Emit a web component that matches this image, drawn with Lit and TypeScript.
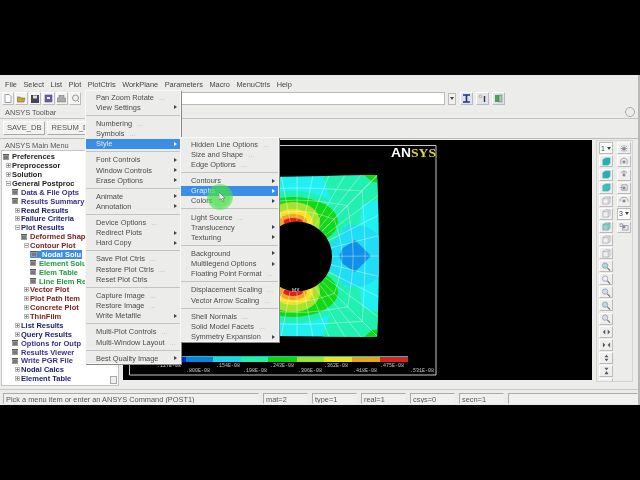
import { LitElement, html, css, svg } from "lit";
import { customElement } from "lit/decorators.js";

type MenuRow = { t?: string; dots?: boolean; sub?: boolean; on?: boolean; sep?: boolean };

const row = (t: string, flags = "") => ({
  t,
  dots: flags.includes("d"),
  sub: flags.includes("s"),
  on: flags.includes("o"),
});
const sep = { sep: true };

const plotMenu: MenuRow[] = [
  row("Pan Zoom Rotate", "d"), row("View Settings", "s"), sep,
  row("Numbering", "d"), row("Symbols", "d"), row("Style", "so"), sep,
  row("Font Controls", "s"), row("Window Controls", "s"), row("Erase Options", "s"), sep,
  row("Animate", "s"), row("Annotation", "s"), sep,
  row("Device Options", "d"), row("Redirect Plots", "s"), row("Hard Copy", "s"), sep,
  row("Save Plot Ctrls", "d"), row("Restore Plot Ctrls", "d"), row("Reset Plot Ctrls"), sep,
  row("Capture Image", "d"), row("Restore Image", "d"), row("Write Metafile", "s"), sep,
  row("Multi-Plot Controls", "d"), row("Multi-Window Layout", "d"), sep,
  row("Best Quality Image", "s"),
];

const styleMenu: MenuRow[] = [
  row("Hidden Line Options", "d"), row("Size and Shape", "d"), row("Edge Options", "d"), sep,
  row("Contours", "s"), row("Graphs", "so"), row("Colors", "s"), sep,
  row("Light Source", "d"), row("Translucency", "s"), row("Texturing", "s"), sep,
  row("Background", "s"), row("Multilegend Options", "s"), row("Floating Point Format", "d"), sep,
  row("Displacement Scaling", "d"), row("Vector Arrow Scaling", "d"), sep,
  row("Shell Normals", "d"), row("Solid Model Facets", "d"), row("Symmetry Expansion", "s"),
];

// level, icon (b = box, p = plus, m = minus), colour class, label
const tree: [number, string, string, string][] = [
  [0, "b", "k", "Preferences"], [0, "p", "k", "Preprocessor"], [0, "p", "k", "Solution"],
  [0, "m", "k", "General Postproc"],
  [1, "b", "v", "Data & File Opts"], [1, "b", "v", "Results Summary"],
  [1, "p", "n", "Read Results"], [1, "p", "n", "Failure Criteria"], [1, "m", "n", "Plot Results"],
  [2, "b", "r", "Deformed Shape"], [2, "m", "r", "Contour Plot"],
  [3, "b", "sel", "Nodal Solu"], [3, "b", "g", "Element Solu"], [3, "b", "g", "Elem Table"],
  [3, "b", "g", "Line Elem Res"],
  [2, "p", "r", "Vector Plot"], [2, "p", "r", "Plot Path Item"], [2, "p", "r", "Concrete Plot"],
  [2, "p", "r", "ThinFilm"],
  [1, "p", "n", "List Results"], [1, "p", "n", "Query Results"], [1, "b", "v", "Options for Outp"],
  [1, "b", "v", "Results Viewer"], [1, "b", "v", "Write PGR File"], [1, "p", "n", "Nodal Calcs"],
  [1, "p", "n", "Element Table"],
];

const bands: [number, number, string][] = [
  [182, 186, "#0a20c8"], [186, 213, "#1080e0"], [213, 241, "#20d4f0"], [241, 268, "#20f0a8"],
  [268, 297, "#10d410"], [297, 324, "#a0e030"], [324, 352, "#f0e020"], [352, 380, "#f0a020"],
  [380, 408, "#e02020"],
];

const hx = 297;
const hy = 257.5;

// mesh spokes run from the hole out to evenly spaced points on the plate edge
function meshLines() {
  const edge: [number, number][] = [];
  for (let x = 249; x < 378; x += 16) edge.push([x, 176]);
  for (let y = 176; y <= 338; y += 20.25) edge.push([378, y]);
  for (let x = 361; x > 249; x -= 16) edge.push([x, 338]);
  const lerp = ([ex, ey]: [number, number], t: number) => {
    const d = Math.hypot(ex - hx, ey - hy);
    const cx = hx + ((ex - hx) / d) * 35;
    const cy = hy + ((ey - hy) / d) * 35;
    return `${(cx + (ex - cx) * t).toFixed(1)},${(cy + (ey - cy) * t).toFixed(1)}`;
  };
  const paths = edge.map((p) => `M${lerp(p, 0)}L${lerp(p, 1)}`);
  [0.22, 0.46, 0.72].forEach((t) => {
    paths.push("M" + edge.map((p) => lerp(p, t)).join("L"));
  });
  return paths.join("");
}

function contours(cy: number) {
  return svg`
    <ellipse cx="293" cy=${cy} rx="52" ry="31" fill="#22f0b0" />
    <ellipse cx="293" cy=${cy} rx="45" ry="25" fill="#12d818" />
    <ellipse cx="293" cy=${cy} rx="27" ry="20" fill="#a4e430" />
    <ellipse cx="293" cy=${cy} rx="20" ry="13" fill="#f2e422" />
    <ellipse cx="293" cy=${cy} rx="14" ry="8" fill="#f2a422" />
    <ellipse cx="293" cy=${cy} rx="10" ry="4" fill="#e02020" />`;
}

const cube = (fill: string, line: string) => svg`
  <svg width="10" height="9" viewBox="0 0 11 10">
    <path d="M2 3L5 1H10V7L8 9H2Z" fill=${fill} stroke=${line} stroke-width=".7" />
    <path d="M2 3H8V9M8 3L10 1" fill="none" stroke=${line} stroke-width=".6" />
  </svg>`;

const lens = (fill: string) => svg`
  <svg width="10" height="9" viewBox="0 0 11 10">
    <circle cx="4.5" cy="4" r="3" fill=${fill} stroke="#99a" stroke-width=".9" />
    <path d="M7 6.5L10 9.5" stroke="#667" stroke-width="1.2" />
  </svg>`;

const arrows = (d: string) => svg`
  <svg width="9" height="8" viewBox="0 0 11 10"><path d=${d} fill="#556" /></svg>`;

const viewIcon = (d: string) => svg`
  <svg width="10" height="9" viewBox="0 0 11 10">
    <path d=${d} fill="none" stroke="#889" stroke-width=".8" />
    <rect x="4" y="4" width="3" height="3" fill="#889" />
  </svg>`;

const sideColumn = [
  cube("#20b0b8", "#4aa"), cube("#20b0b8", "#4aa"), cube("#40c0c0", "#4aa"),
  cube("#f0f0ee", "#99a"), cube("#f0f0ee", "#99a"), cube("#90d4cc", "#799"), cube("#f0f0ee", "#99a"),
  cube("#f0f0ee", "#99a"),
  lens("#a8dcd8"), lens("#eef"), lens("#cde"), lens("#b8d8e0"), lens("#dde"),
  arrows("M1 5L4 2V8ZM10 5L7 2V8Z"), arrows("M4 5L1 2V8ZM7 5L10 2V8Z"),
  arrows("M5.5 1L8 4H3ZM3 6H8L5.5 9Z"), arrows("M3 1H8L5.5 4ZM5.5 5L8 9H3Z"), arrows("M1 5L4 3V7ZM10 5L7 3V7Z"),
];

const viewColumn = [
  viewIcon("M5.5 1V9M1.5 5H9.5M2 2L9 8M9 2L2 8"),
  viewIcon("M2 8V3L5.5 1L9 3V8"),
  viewIcon("M2 3L5.5 1L9 3M5.5 1V4"),
  viewIcon("M3 2H9V8H3ZM1 5H3"),
  viewIcon("M1 6A4.5 4.5 0 0 1 10 6"),
  null,
  viewIcon("M1 2H4V5H1ZM4 4H10V9H4Z"),
];

@customElement("app-root")
export class AppRoot extends LitElement {
  static styles = css`
    :host {
      display: block;
      width: 640px;
      height: 480px;
      background: #000;
      overflow: hidden;
      font-family: "Liberation Sans", Arial, sans-serif;
      font-size: 7.4px;
      color: #444;
    }
    .win {
      position: relative;
      display: flex;
      flex-direction: column;
      margin-top: 75px;
      height: 330px;
      background: #ececea;
      border-right: 2px solid #b8b8b8;
      filter: blur(0.5px);
    }
    .menubar {
      display: flex;
      align-items: center;
      height: 16px;
      padding: 2px 0 0 5px;
      gap: 6.5px;
      color: #444;
    }
    .tools {
      display: flex;
      align-items: center;
      height: 17px;
      padding-left: 2px;
      gap: 1px;
    }
    .tool {
      flex: none;
      display: flex;
      align-items: center;
      justify-content: center;
      width: 12.4px;
      height: 13px;
      box-sizing: border-box;
      background: #f4f4f2;
      border: 1px solid;
      border-color: #fff #bbb #bbb #fff;
    }
    .cmd {
      flex: 0 0 355px;
      margin-left: 8px;
      height: 13px;
      box-sizing: border-box;
      background: #fff;
      border: 1px solid #bbb;
    }
    .drop {
      flex: none;
      width: 8px;
      height: 12px;
      margin-left: 2px;
      box-sizing: border-box;
      display: flex;
      align-items: center;
      justify-content: center;
      background: #f0f0ee;
      border: 1px solid #bbb;
    }
    .tail {
      margin-left: 3px;
      display: flex;
      gap: 3px;
    }
    .tail .tool {
      width: 13px;
      background: #dfe4ec;
    }
    .tb-label {
      display: flex;
      justify-content: space-between;
      align-items: center;
      height: 13px;
      padding: 0 3px 0 5px;
      color: #555;
      border-bottom: 1px solid #c4c4c4;
    }
    .circle {
      width: 8px;
      height: 8px;
      border-radius: 50%;
      border: 1px solid #aaa;
    }
    .tb-row {
      display: flex;
      gap: 2px;
      height: 19px;
      padding: 2px 0 0 3px;
      border-bottom: 1px solid #bcbcbc;
    }
    .tb-btn {
      height: 12px;
      padding: 0 3px;
      line-height: 12px;
      font-size: 7.6px;
      color: #555;
      background: #f2f2f0;
      border: 1px solid;
      border-color: #fff #aaa #aaa #fff;
      white-space: nowrap;
    }
    .body {
      display: flex;
      height: 246px;
      margin-top: 1px;
    }
    .left {
      flex: 0 0 123px;
      display: flex;
      flex-direction: column;
    }
    .left-title {
      height: 10px;
      line-height: 11px;
      padding-left: 5px;
      color: #555;
    }
    .treebox {
      position: relative;
      flex: 0 0 233px;
      margin: 0 4px 0 1px;
      padding-top: 1px;
      background: #fff;
      border: 1px solid #c4c4c4;
      overflow: hidden;
    }
    .node {
      display: flex;
      align-items: center;
      height: 8.88px;
      font-weight: 700;
      font-size: 7.5px;
      white-space: nowrap;
    }
    .l0 { padding-left: 1px; }
    .l1 { padding-left: 10px; }
    .l2 { padding-left: 19px; }
    .l3 { padding-left: 28px; }
    .ico {
      flex: 0 0 9px;
      height: 7px;
      display: flex;
      align-items: center;
    }
    .ico.exp {
      padding-left: 3px;
      box-sizing: border-box;
    }
    .box {
      width: 6px;
      height: 6px;
      background: #777;
      border-top: 1px solid #555;
      box-sizing: border-box;
      box-shadow: inset 0 0 0 1px #999;
    }
    .k { color: #222; }
    .v { color: #3b2f8c; }
    .n { color: #1c1c6e; }
    .r { color: #7c2020; }
    .g { color: #1c9a3c; }
    .sel span {
      color: #fff;
      background: #3a8ee8;
      padding: 0 1px;
    }
    .scroll {
      position: absolute;
      right: 1px;
      bottom: 1px;
      width: 7px;
      height: 8px;
      background: #eee;
      border: 1px solid #aaa;
      box-sizing: border-box;
    }
    .canvas {
      flex: 0 0 469px;
      height: 240px;
      background: #000;
    }
    .canvas svg {
      display: block;
    }
    .right {
      flex: 1;
      display: flex;
      gap: 4px;
      height: 242px;
      margin: 0 5px 0 4px;
      padding: 1px 0 0 2px;
      border: 1px solid #d4d4d4;
      box-sizing: border-box;
      overflow: hidden;
    }
    .col {
      display: flex;
      flex-direction: column;
      gap: 1.1px;
    }
    .bt {
      flex: none;
      display: flex;
      align-items: center;
      justify-content: center;
      width: 14px;
      height: 12px;
      box-sizing: border-box;
      background: #efefed;
      border: 1px solid;
      border-color: #fff #bbb #bbb #fff;
      font-size: 7px;
    }
    .bt.sel-num {
      background: #fff;
      border-color: #bbb;
      justify-content: space-between;
      padding: 0 1px;
    }
    .tiny {
      border-left: 2px solid transparent;
      border-right: 2px solid transparent;
      border-top: 3px solid #444;
    }
    .status {
      display: flex;
      gap: 4px;
      height: 13px;
      margin-top: 3px;
      padding: 3px 0 0 3px;
      border-top: 1px solid #c8c8c8;
      color: #555;
    }
    .field {
      flex: none;
      height: 11px;
      line-height: 11px;
      padding-left: 2px;
      box-sizing: border-box;
      background: #f0f0ee;
      border: 1px solid;
      border-color: #aaa #eee #eee #aaa;
      white-space: nowrap;
      overflow: hidden;
    }
    .f-main { width: 256px; }
    .f-small { width: 45px; }
    .f-rest { flex: 1; }
    .menu {
      position: absolute;
      box-sizing: border-box;
      padding: 2px 1px;
      background: #ececea;
      box-shadow: 1px 1px 0 #888, inset 0 0 0 1px #f8f8f8;
      color: #4a4a4a;
    }
    .m1 { left: 85px; top: 15px; width: 96px; height: 274px; }
    .m2 { left: 180px; top: 62px; width: 99px; height: 205px; }
    .mi {
      display: flex;
      justify-content: space-between;
      align-items: center;
      height: 10.2px;
      padding: 0 3px 0 10px;
      white-space: nowrap;
    }
    .mi.on {
      background: #3a8ee8;
      color: #dfeaf8;
    }
    .msep {
      height: 5.9px;
      display: flex;
      align-items: center;
    }
    .msep::after {
      content: "";
      flex: 1;
      height: 1px;
      background: #c4c4c4;
    }
    .dots {
      color: #bbb;
      margin-left: 5px;
    }
    .arrow {
      border-top: 2px solid transparent;
      border-bottom: 2px solid transparent;
      border-left: 3px solid #444;
    }
    .on .arrow { border-left-color: #fff; }
    .pointer {
      position: absolute;
      left: 207px;
      top: 109px;
      width: 26px;
      height: 26px;
      border-radius: 50%;
      background: radial-gradient(circle, rgba(70, 225, 70, 0.75) 50%, rgba(70, 225, 70, 0.15) 100%);
    }
    .pointer svg {
      position: absolute;
      left: 12px;
      top: 8px;
    }
  `;

  private renderMenu(cls: string, rows: MenuRow[]) {
    return html`<div class="menu ${cls}">
      ${rows.map((r) =>
        r.sep
          ? html`<div class="msep"></div>`
          : html`<div class="mi ${r.on ? "on" : ""}">
              <span>${r.t}${r.dots ? html`<span class="dots">...</span>` : ""}</span>
              ${r.sub ? html`<i class="arrow"></i>` : ""}
            </div>`
      )}
    </div>`;
  }

  private renderNode([level, icon, color, label]: [number, string, string, string]) {
    const glyph =
      icon === "b"
        ? html`<span class="ico"><i class="box"></i></span>`
        : html`<span class="ico exp">
            <svg width="5" height="5" viewBox="0 0 5 5">
              <rect x=".5" y=".5" width="4" height="4" fill="none" stroke="#aaa" stroke-width=".8" />
              <path d=${icon === "p" ? "M1 2.5H4M2.5 1V4" : "M1 2.5H4"} stroke="#666" stroke-width=".7" />
            </svg>
          </span>`;
    return html`<div class="node l${level} ${color}">${glyph}<span>${label}</span></div>`;
  }

  private renderPlot() {
    return html`<svg width="469" height="240" viewBox="123 141 469 240">
      <defs>
        <clipPath id="plate">
          <path d="M270 178L377 176Q381 257 377 338L270 337Z" />
        </clipPath>
      </defs>
      <path d="M129.5 376V146.5H436V376Z" fill="none" stroke="#c8c8c8" />
      <text x="391" y="158" font-family="Liberation Sans" font-weight="700" font-size="12" fill="#fff"
        textLength="20" lengthAdjust="spacingAndGlyphs">AN</text>
      <text x="411" y="158" font-family="Liberation Serif" font-weight="700" font-size="12" fill="#d8d840"
        textLength="25" lengthAdjust="spacingAndGlyphs">SYS</text>
      <g clip-path="url(#plate)">
        <rect x="270" y="170" width="115" height="175" fill="#20f0f0" />
        <path d="M322 174H385V198L362 206L358 232L338 222Z" fill="#22f0b0" />
        <path d="M322 340H385V316L362 308L358 282L338 292Z" fill="#22f0b0" />
        <path d="M362 174H385V184L372 183Z" fill="#12d818" />
        <path d="M362 340H385V330L372 331Z" fill="#12d818" />
        <ellipse cx="355" cy="257" rx="31" ry="31" fill="#20dcf6" />
        <path d="M355 241L371 257L355 273L343 265L339 257L343 249Z" fill="#1090e8" />
        ${contours(223)} ${contours(293)}
        <path d=${meshLines()} fill="none" stroke="#fff" stroke-opacity=".55" stroke-width=".7" />
      </g>
      <circle cx=${hx} cy=${hy} r="35" fill="#000" />
      <text x="292" y="293" font-family="Liberation Sans" font-size="5" fill="#eee">MX</text>
      <rect x="182" y="357" width="226" height="1" fill="#20c0a0" />
      ${bands.map(
        ([a, b, c]) => svg`<rect x=${a} y="358" width=${b - a} height="5" fill=${c} />`
      )}
      <g font-family="Liberation Mono" font-size="5" fill="#c8c8c8">
        <text x="157" y="368">.127E-08</text>
        <text x="216" y="368">.154E-08</text>
        <text x="270" y="368">.243E-08</text>
        <text x="324" y="368">.362E-08</text>
        <text x="380" y="368">.475E-08</text>
        <text x="186" y="373">.800E-08</text>
        <text x="243" y="373">.198E-08</text>
        <text x="298" y="373">.306E-08</text>
        <text x="353" y="373">.418E-08</text>
        <text x="410" y="373">.531E-08</text>
      </g>
    </svg>`;
  }

  render() {
    return html`<div class="win">
      <div class="menubar">
        ${["File", "Select", "List", "Plot", "PlotCtrls", "WorkPlane", "Parameters", "Macro", "MenuCtrls", "Help"].map(
          (m) => html`<span>${m}</span>`
        )}
      </div>
      <div class="tools">
        <span class="tool"><svg width="8" height="9" viewBox="0 0 8 9"><path d="M1 .5H5L7 2.5V8.5H1Z" fill="#fff" stroke="#889" stroke-width=".8" /></svg></span>
        <span class="tool"><svg width="9" height="8" viewBox="0 0 9 8"><path d="M0 2H3L4 3H8L7 7H0Z" fill="#c8a830" stroke="#665" stroke-width=".6" /></svg></span>
        <span class="tool"><svg width="8" height="8" viewBox="0 0 8 8"><rect width="8" height="8" fill="#445" /><rect x="2" y=".5" width="4" height="3" fill="#ddd" /></svg></span>
        <span class="tool"><svg width="9" height="9" viewBox="0 0 9 9"><rect x="1" y="1" width="7" height="7" fill="#6a5aa8" stroke="#557" stroke-width=".6" /><rect x="3" y="3" width="3" height="2" fill="#eee" /></svg></span>
        <span class="tool"><svg width="9" height="8" viewBox="0 0 9 8"><path d="M2 0H7V3H9V7H0V3H2Z" fill="#aaa" stroke="#777" stroke-width=".5" /></svg></span>
        <span class="tool"><svg width="9" height="9" viewBox="0 0 9 9"><circle cx="4.5" cy="4" r="3" fill="#eee" stroke="#999" /><path d="M6 6L8 8" stroke="#999" /></svg></span>
        <div class="cmd"></div>
        <span class="drop"><i class="tiny"></i></span>
        <div class="tail">
          <span class="tool"><svg width="9" height="9" viewBox="0 0 9 9"><path d="M1 1H8M1 8H8M4.5 1V8" stroke="#223088" stroke-width="1.6" /></svg></span>
          <span class="tool"><svg width="9" height="9" viewBox="0 0 9 9"><circle cx="2.5" cy="2.5" r="1.4" fill="none" stroke="#c8a030" stroke-width=".8" /><path d="M6.5 2V8" stroke="#334" stroke-width="1.4" /></svg></span>
          <span class="tool"><svg width="9" height="9" viewBox="0 0 9 9"><rect x="1" y="1" width="4" height="7" fill="#5a9a5a" /><rect x="5" y="1" width="3" height="7" fill="#aac8aa" stroke="#575" stroke-width=".5" /></svg></span>
        </div>
      </div>
      <div class="tb-label"><span>ANSYS Toolbar</span><i class="circle"></i></div>
      <div class="tb-row">
        <span class="tb-btn">SAVE_DB</span>
        <span class="tb-btn">RESUM_DB</span>
      </div>
      <div class="body">
        <div class="left">
          <div class="left-title">ANSYS Main Menu</div>
          <div class="treebox">
            ${tree.map((n) => this.renderNode(n))}
            <div class="scroll"></div>
          </div>
        </div>
        <div class="canvas">${this.renderPlot()}</div>
        <div class="right">
          <div class="col">
            <div class="bt sel-num"><span>1</span><i class="tiny"></i></div>
            ${sideColumn.map((i) => html`<div class="bt">${i}</div>`)}
          </div>
          <div class="col">
            ${viewColumn.map((i) =>
              i
                ? html`<div class="bt">${i}</div>`
                : html`<div class="bt sel-num"><span>3</span><i class="tiny"></i></div>`
            )}
          </div>
        </div>
      </div>
      <div class="status">
        <div class="field f-main">Pick a menu item or enter an ANSYS Command (POST1)</div>
        ${["mat=2", "type=1", "real=1", "csys=0", "secn=1"].map(
          (s) => html`<div class="field f-small">${s}</div>`
        )}
        <div class="field f-rest"></div>
      </div>
      ${this.renderMenu("m1", plotMenu)} ${this.renderMenu("m2", styleMenu)}
      <div class="pointer">
        <svg width="7" height="10" viewBox="0 0 7 10"><path d="M0 0V8L2 6.5L3.5 9.5L5 9L3.6 6H6Z" fill="#eee" stroke="#456" stroke-width=".5" /></svg>
      </div>
    </div>`;
  }
}
